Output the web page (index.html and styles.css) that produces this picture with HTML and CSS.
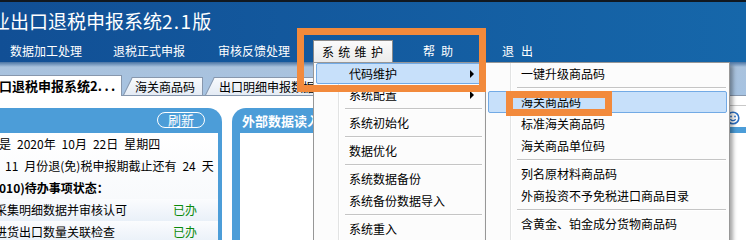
FILE: index.html
```html
<!DOCTYPE html>
<html lang="zh-CN">
<head>
<meta charset="utf-8">
<title>出口退税申报系统</title>
<link rel="stylesheet" href="styles.css">
</head>
<body>
<div class="app">
  <header class="titlebar">
    <div class="title">业出口退税申报系统<span class="ver">2.1</span>版</div>
    <nav class="menubar">
      <span class="mi mi-1">数据加工处理</span>
      <span class="mi mi-2">退税正式申报</span>
      <span class="mi mi-3">审核反馈处理</span>
      <span class="mi mi-open">系 统 维 护</span>
      <span class="mi mi-help">帮 助</span>
      <span class="mi mi-exit">退 出</span>
    </nav>
  </header>

  <div class="tabstrip">
    <div class="tab tab-active">口退税申报系统2<span class="dots">...</span></div>
    <div class="tab tab-1">海关商品码</div>
    <div class="tab tab-2">出口明细申报数据</div>
  </div>

  <main class="content">
    <section class="panel panel-status">
      <div class="panel-head"><span class="btn-refresh">刷新</span></div>
      <div class="panel-body">
        <div class="row r-date">是 2020年 10月 22日 星期四</div>
        <div class="row r-deadline">11 月份退(免)税申报期截止还有 24 天</div>
        <div class="row r-title">010)待办事项状态：</div>
        <div class="row r-task"><span class="task">采集明细数据并审核认可</span><span class="done">已办</span></div>
        <div class="row r-task"><span class="task">进货出口数量关联检查</span><span class="done">已办</span></div>
      </div>
    </section>
    <section class="panel panel-import">
      <div class="panel-head">外部数据读入</div>
      <div class="panel-body"></div>
    </section>
    <section class="panel panel-side">
      <div class="side-head">
        <svg class="smile" width="14" height="14" viewBox="0 0 14 14">
          <circle cx="7" cy="7" r="5.8" fill="none" stroke="#2d6fc2" stroke-width="1.6"/>
          <circle cx="5" cy="5.5" r="0.9" fill="#2d6fc2"/>
          <circle cx="9" cy="5.5" r="0.9" fill="#2d6fc2"/>
          <path d="M4.3 8.2 Q7 11 9.7 8.2" fill="none" stroke="#2d6fc2" stroke-width="1.3"/>
        </svg>
      </div>
      <div class="side-bar"></div>
    </section>
  </main>

  <div class="menu menu-main">
    <div class="mitem first active">代码维护<i class="arrow"></i></div>
    <div class="mitem">系统配置<i class="arrow"></i></div>
    <div class="msep"></div>
    <div class="mitem">系统初始化</div>
    <div class="msep"></div>
    <div class="mitem">数据优化</div>
    <div class="msep"></div>
    <div class="mitem">系统数据备份</div>
    <div class="mitem">系统备份数据导入</div>
    <div class="msep"></div>
    <div class="mitem">系统重入</div>
  </div>

  <div class="menu menu-sub">
    <div class="mitem">一键升级商品码</div>
    <div class="msep"></div>
    <div class="mitem active">海关商品码</div>
    <div class="mitem">标准海关商品码</div>
    <div class="mitem">海关商品单位码</div>
    <div class="msep"></div>
    <div class="mitem">列名原材料商品码</div>
    <div class="mitem">外商投资不予免税进口商品目录</div>
    <div class="msep"></div>
    <div class="mitem">含黄金、铂金成分货物商品码</div>
  </div>

  <div class="mark mark-1"></div>
  <div class="mark mark-2"></div>
</div>
</body>
</html>
```

FILE: styles.css
```css
* { box-sizing: border-box; }
html, body { margin: 0; padding: 0; }
body {
  width: 746px;
  height: 240px;
  overflow: hidden;
  background: #fff;
  font-family: "Noto Sans CJK SC", sans-serif;
  font-size: 12px;
  color: #000;
}
.app {
  position: relative;
  width: 746px;
  height: 240px;
  overflow: hidden;
}

/* ---------- title bar ---------- */
.titlebar {
  height: 62px;
  border-top: 2px solid #111820;
  background: linear-gradient(90deg, #114f95, #1667aa);
  color: #fff;
}
.title {
  font-size: 19px;
  line-height: 38px;
  height: 38px;
  margin-left: -9px;
  white-space: nowrap;
}
.ver { letter-spacing: 1.3px; }
.menubar {
  display: flex;
  height: 22px;
  padding-left: 10px;
}
.mi {
  line-height: 21px;
  white-space: nowrap;
}
.mi-1 { margin-right: 31px; }
.mi-2 { margin-right: 33px; }
.mi-3 { margin-right: 23px; }
.mi-open {
  width: 80px;
  padding-left: 8px;
  color: #000;
  background: linear-gradient(#fbfbfb, #ebebeb);
  border: 1px solid #8a8a8a;
  border-bottom: none;
  word-spacing: 1.6px;
  margin-right: 30px;
}
.mi-help { word-spacing: 3.3px; margin-right: 49px; }
.mi-exit { word-spacing: 4.3px; }

/* ---------- tabs ---------- */
.tabstrip {
  display: flex;
  align-items: flex-end;
  height: 34px;
  background: linear-gradient(#4a74a3 0px, #a9c2dd 5px, #a6c3e2 100%);
  box-shadow: inset 0 -1px 0 #8797ad;
}
.tab {
  position: relative;
  z-index: 0;
  white-space: nowrap;
}
.tab-active {
  margin-left: -10px;
  width: 132px;
  height: 21px;
  padding-left: 9px;
  background: #fff;
  border-top: 1px solid #8797ad;
  border-right: 1px solid #8797ad;
  font-weight: bold;
  font-size: 13px;
  line-height: 20px;
  z-index: 1;
}
.dots { letter-spacing: 2.5px; }
.tab-1, .tab-2 {
  height: 18px;
  margin-bottom: 1px;
  line-height: 17px;
  background: linear-gradient(#f8fafd, #e4ebf4);
  border-top: 1px solid #8797ad;
  border-right: 1px solid #8797ad;
}
.tab-1::before, .tab-2::before {
  content: "";
  position: absolute;
  z-index: -1;
  left: -9px;
  top: -1px;
  bottom: 0;
  width: 12px;
  background: linear-gradient(#f8fafd, #e4ebf4);
  border-top: 1px solid #8797ad;
  border-left: 1px solid #8797ad;
  transform: skewX(-26.5deg);
  transform-origin: 0 100%;
}
.tab-1 {
  margin-left: 10px;
  width: 71px;
  padding-left: 3px;
}
.tab-2 {
  margin-left: 11px;
  width: 120px;
  padding-left: 5px;
}

/* ---------- content panels ---------- */
.content {
  display: flex;
  padding-top: 12px;
  height: 144px;
}
.panel-status {
  flex: none;
  width: 232px;
  margin-left: -10px;
  display: flex;
  flex-direction: column;
}
.panel-head {
  height: 25px;
  flex: none;
  background: #4c9dd8;
}
.panel-status .panel-head {
  border-top-right-radius: 14px;
  display: flex;
  justify-content: flex-end;
  padding: 4px 17px 0 0;
}
.btn-refresh {
  width: 48px;
  height: 16px;
  border: 1.5px solid #fff;
  border-radius: 8px;
  color: #fff;
  font-size: 13px;
  line-height: 13px;
  text-align: center;
}
.panel-status .panel-body {
  flex: 1;
  padding-left: 9px;
  border-right: 4px solid #4c9dd8;
  background: linear-gradient(#ffffff, #f3f6fa);
}
.row {
  height: 22px;
  line-height: 22px;
  white-space: nowrap;
  word-spacing: 3.3px;
}
.r-date { margin-left: 0; }
.r-deadline { margin-left: 6px; }
.r-title { margin-left: 0; font-weight: bold; }
.r-task {
  display: flex;
  margin-left: -4px;
  background: linear-gradient(#fbfcfe, #e9f0f8);
}
.task { width: 178px; }
.done { color: #0b8a0b; }

.panel-import {
  flex: 1;
  margin-left: 10px;
  display: flex;
  flex-direction: column;
}
.panel-import .panel-head {
  border-top-left-radius: 14px;
  color: #fff;
  font-weight: bold;
  font-size: 13px;
  line-height: 25px;
  padding-left: 10px;
  white-space: nowrap;
}
.panel-import .panel-body {
  flex: 1;
  border-left: 8px solid #4c9dd8;
  background: #fff;
}
.panel-side {
  flex: none;
  width: 17px;
  margin-left: 3px;
  margin-top: -3px;
}
.side-head {
  height: 22px;
  border-top: 1px solid #c8c8c8;
  padding-top: 5px;
}
.smile {
  display: block;
  margin-left: -3px;
}
.side-bar {
  height: 6px;
  background: #4c9dd8;
}

/* ---------- dropdown menus ---------- */
.menu {
  position: absolute;
  top: 62px;
  height: 190px;
  padding: 0 2px;
  background-color: #fcfcfc;
  background-image: linear-gradient(90deg, transparent 24px, #e2e3e3 24px, #e2e3e3 25px, #ffffff 25px, #ffffff 26px, transparent 26px);
  border: 1px solid #979797;
}
.menu-main { left: 313px; width: 173px; }
.menu-sub {
  left: 485px;
  width: 245px;
  box-shadow: 3px 3px 4px rgba(0, 0, 0, 0.35);
}
.mitem {
  position: relative;
  height: 22px;
  line-height: 20px;
  padding-left: 32px;
  border: 1px solid transparent;
  white-space: nowrap;
}
.mitem.first {
  height: 21px;
  line-height: 19px;
}
.mitem.active {
  background: #c7e0fa;
  border-color: #72aae5;
  border-radius: 2px;
}
.arrow {
  position: absolute;
  right: 8px;
  top: 50%;
  margin-top: -4px;
  width: 0;
  height: 0;
  border-left: 4px solid #000;
  border-top: 4px solid transparent;
  border-bottom: 4px solid transparent;
}
.msep {
  height: 6px;
  margin: 0 1px 0 29px;
  background: linear-gradient(transparent 2px, #c5c5c5 2px, #c5c5c5 3px, #ffffff 3px, #ffffff 4px, transparent 4px);
}

/* ---------- annotation marks ---------- */
.mark {
  position: absolute;
  border: 7px solid #f28a3c;
}
.mark-1 { left: 297px; top: 28px; width: 189px; height: 64px; }
.mark-2 { left: 506px; top: 91px; width: 106px; height: 25px; }
```
